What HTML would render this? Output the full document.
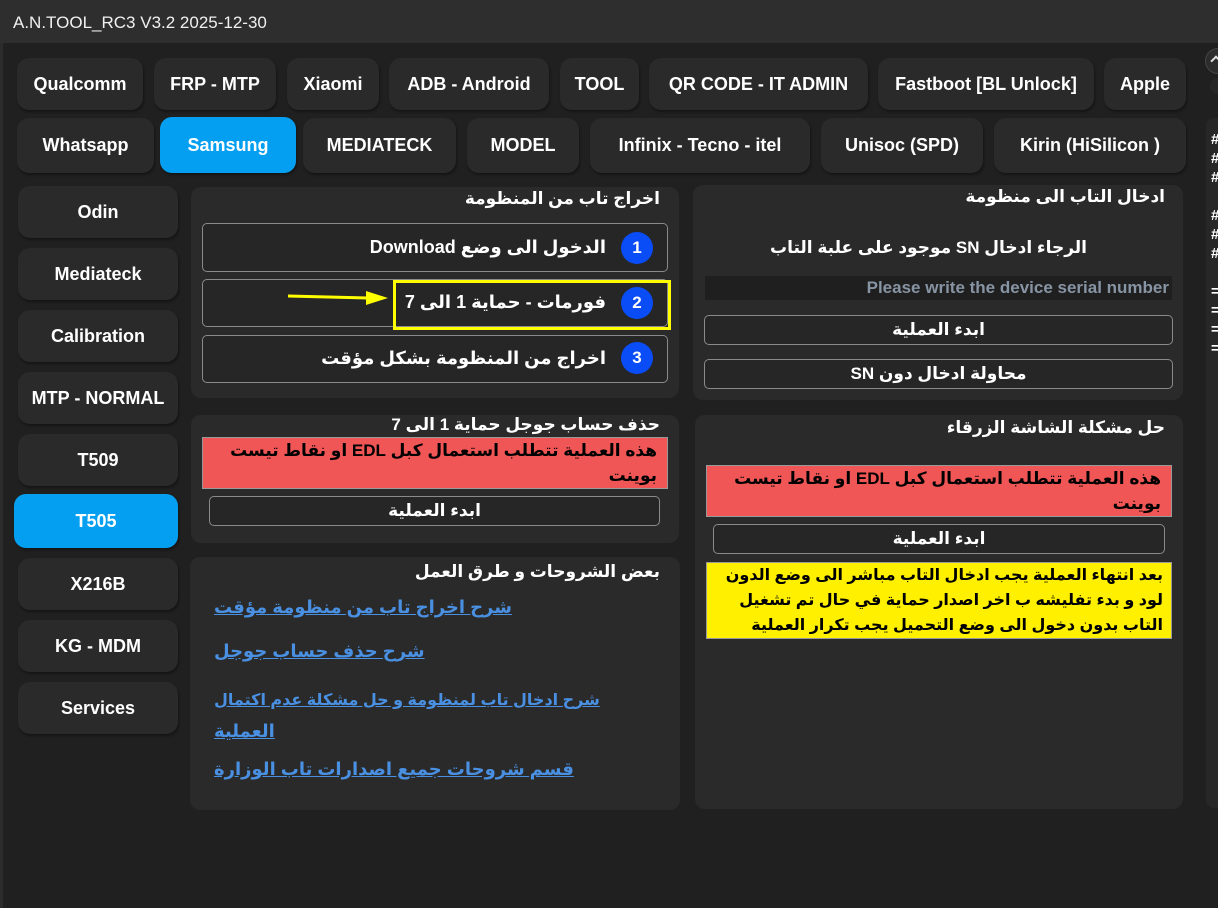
<!DOCTYPE html>
<html><head><meta charset="utf-8"><style>
*{box-sizing:border-box;margin:0;padding:0}
body{width:1218px;height:908px;overflow:hidden;background:#202020;font-family:"Liberation Sans","DejaVu Sans",sans-serif;color:#fff;position:relative}
.title{position:absolute;left:0;top:0;width:1218px;height:43px;background:#2e2e2e;font-size:17px;padding:13px 0 0 13px;color:#f0f0f0}
.lb{position:absolute;left:0;top:43px;width:3px;height:865px;background:#2c2c2c}
.b{position:absolute;background:#2a2a2a;border-radius:12px;box-shadow:1px 2px 2px #151515;display:flex;align-items:center;justify-content:center;font-weight:bold;font-size:18px;color:#fff;white-space:nowrap}
.b.on{background:#049ff0}
.p{position:absolute;background:#2a2a2a;border-radius:10px}
.pt{position:absolute;font-weight:bold;font-size:17px;direction:rtl;white-space:nowrap;color:#fff}
.it{position:absolute;border:1px solid #8a8a8a;border-radius:5px;background:#262626;direction:rtl;font-size:18px;font-weight:bold;white-space:nowrap}
.c{position:absolute;width:32px;height:32px;border-radius:50%;background:#0a4cf5;color:#fff;font-size:17px;font-weight:bold;display:flex;align-items:center;justify-content:center}
.ob{position:absolute;border:1px solid #8a8a8a;border-radius:5px;background:#262626;display:flex;align-items:center;justify-content:center;font-weight:bold;font-size:17px;direction:rtl}
.red{position:absolute;background:#f05656;border:1px solid #999;color:#000;font-weight:bold;font-size:17px;direction:rtl;line-height:25px;padding:0 10px 0 4px;white-space:nowrap}
.yel{position:absolute;background:#fff000;border:1px solid #999;color:#000;font-weight:bold;font-size:16px;direction:rtl;line-height:25px;padding:0 8px 0 2px;white-space:nowrap}
.lk{position:absolute;left:214px;color:#4a90e2;text-decoration:underline;font-size:18px;direction:rtl;white-space:nowrap;font-weight:bold}
</style></head><body>
<div class="title">A.N.TOOL_RC3 V3.2 2025-12-30</div>
<div class="lb"></div>

<div class="b" style="left:17px;top:58px;width:126px;height:52px">Qualcomm</div>
<div class="b" style="left:154px;top:58px;width:122px;height:52px">FRP - MTP</div>
<div class="b" style="left:287px;top:58px;width:92px;height:52px">Xiaomi</div>
<div class="b" style="left:389px;top:58px;width:160px;height:52px">ADB - Android</div>
<div class="b" style="left:560px;top:58px;width:79px;height:52px">TOOL</div>
<div class="b" style="left:649px;top:58px;width:219px;height:52px">QR CODE - IT ADMIN</div>
<div class="b" style="left:878px;top:58px;width:216px;height:52px">Fastboot [BL Unlock]</div>
<div class="b" style="left:1104px;top:58px;width:82px;height:52px">Apple</div>

<div class="b" style="left:17px;top:118px;width:137px;height:55px">Whatsapp</div>
<div class="b on" style="left:160px;top:117px;width:136px;height:56px">Samsung</div>
<div class="b" style="left:303px;top:118px;width:153px;height:55px">MEDIATECK</div>
<div class="b" style="left:467px;top:118px;width:112px;height:55px">MODEL</div>
<div class="b" style="left:590px;top:118px;width:220px;height:55px">Infinix - Tecno - itel</div>
<div class="b" style="left:821px;top:118px;width:162px;height:55px">Unisoc (SPD)</div>
<div class="b" style="left:994px;top:118px;width:192px;height:55px">Kirin (HiSilicon )</div>

<div class="b" style="left:18px;top:186px;width:160px;height:52px">Odin</div>
<div class="b" style="left:18px;top:248px;width:160px;height:52px">Mediateck</div>
<div class="b" style="left:18px;top:310px;width:160px;height:52px">Calibration</div>
<div class="b" style="left:18px;top:372px;width:160px;height:52px">MTP - NORMAL</div>
<div class="b" style="left:18px;top:434px;width:160px;height:52px">T509</div>
<div class="b on" style="left:14px;top:494px;width:164px;height:54px">T505</div>
<div class="b" style="left:18px;top:558px;width:160px;height:52px">X216B</div>
<div class="b" style="left:18px;top:620px;width:160px;height:52px">KG - MDM</div>
<div class="b" style="left:18px;top:682px;width:160px;height:52px">Services</div>

<!-- panel 1 -->
<div class="p" style="left:191px;top:187px;width:488px;height:211px"></div>
<div class="pt" style="right:558px;top:189px">اخراج تاب من المنظومة</div>
<div class="it" style="left:202px;top:223px;width:466px;height:49px"><span style="position:absolute;right:61px;top:13px">الدخول الى وضع Download</span></div>
<div class="c" style="left:621px;top:232px">1</div>
<div class="it" style="left:202px;top:279px;width:466px;height:48px"><span style="position:absolute;right:61px;top:12px">فورمات - حماية 1 الى 7</span></div>
<div class="c" style="left:621px;top:287px">2</div>
<div style="position:absolute;left:393px;top:280px;width:278px;height:50px;border:3px solid #ffff00"></div>
<svg style="position:absolute;left:286px;top:288px" width="106" height="20"><path d="M2 8 L82 10" stroke="#ffff00" stroke-width="3"/><path d="M80 3 L102 10 L80 17 Z" fill="#ffff00"/></svg>
<div class="it" style="left:202px;top:335px;width:466px;height:48px"><span style="position:absolute;right:61px;top:12px">اخراج من المنظومة بشكل مؤقت</span></div>
<div class="c" style="left:621px;top:342px">3</div>

<!-- panel 2 -->
<div class="p" style="left:191px;top:415px;width:488px;height:128px"></div>
<div class="pt" style="right:558px;top:415px">حذف حساب جوجل حماية 1 الى 7</div>
<div class="red" style="left:202px;top:437px;width:466px;height:52px">هذه العملية تتطلب استعمال كبل EDL او نقاط تيست<br>بوينت</div>
<div class="ob" style="left:209px;top:496px;width:451px;height:30px">ابدء العملية</div>

<!-- panel 3 -->
<div class="p" style="left:190px;top:557px;width:490px;height:253px"></div>
<div class="pt" style="right:558px;top:562px">بعض الشروحات و طرق العمل</div>
<div class="lk" style="top:597px">شرح اخراج تاب من منظومة مؤقت</div>
<div class="lk" style="top:641px">شرح حذف حساب جوجل</div>
<div class="lk" style="top:686px;width:386px;line-height:30px;text-align:left;font-size:16px">شرح ادخال تاب لمنظومة و حل مشكلة عدم اكتمال<br><span style="font-size:18px">العملية</span></div>
<div class="lk" style="top:759px">قسم شروحات جميع اصدارات تاب الوزارة</div>

<!-- right panel 1 -->
<div class="p" style="left:693px;top:185px;width:490px;height:215px"></div>
<div class="pt" style="right:53px;top:187px">ادخال التاب الى منظومة</div>
<div class="pt" style="right:131px;top:238px">الرجاء ادخال SN موجود على علبة التاب</div>
<div style="position:absolute;left:705px;top:276px;width:467px;height:24px;background:#1f1f1f;color:#8794a3;font-weight:bold;font-size:17px;text-align:right;padding:2px 3px 0 0">Please write the device serial number</div>
<div class="ob" style="left:704px;top:315px;width:469px;height:30px">ابدء العملية</div>
<div class="ob" style="left:704px;top:359px;width:469px;height:30px">محاولة ادخال دون SN</div>

<!-- right panel 2 -->
<div class="p" style="left:695px;top:415px;width:488px;height:394px"></div>
<div class="pt" style="right:53px;top:418px">حل مشكلة الشاشة الزرقاء</div>
<div class="red" style="left:706px;top:465px;width:466px;height:52px">هذه العملية تتطلب استعمال كبل EDL او نقاط تيست<br>بوينت</div>
<div class="ob" style="left:713px;top:524px;width:452px;height:30px">ابدء العملية</div>
<div class="yel" style="left:706px;top:562px;width:466px;height:77px">بعد انتهاء العملية يجب ادخال التاب مباشر الى وضع الدون<br>لود و بدء تفليشه ب اخر اصدار حماية في حال تم تشغيل<br>التاب بدون دخول الى وضع التحميل يجب تكرار العملية</div>

<!-- far right -->
<div style="position:absolute;left:1206px;top:118px;width:20px;height:690px;background:#272727;border-radius:8px 0 0 8px"></div>
<div style="position:absolute;left:1211px;top:130px;font-size:15px;font-weight:bold;line-height:19px;color:#fff">#<br>#<br>#<br><br>#<br>#<br>#<br><br>=<br>=<br>=<br>=</div>
<div style="position:absolute;left:1205px;top:48px;width:26px;height:26px;border-radius:50%;background:#2c2c2c;border:1px solid #444"></div>
<div style="position:absolute;left:1212px;top:57px;width:8px;height:8px;border-left:2px solid #ddd;border-top:2px solid #ddd;transform:rotate(45deg)"></div>
<div style="position:absolute;left:1210px;top:78px;width:14px;height:16px;border-radius:50%;background:#262626"></div>
</body></html>
